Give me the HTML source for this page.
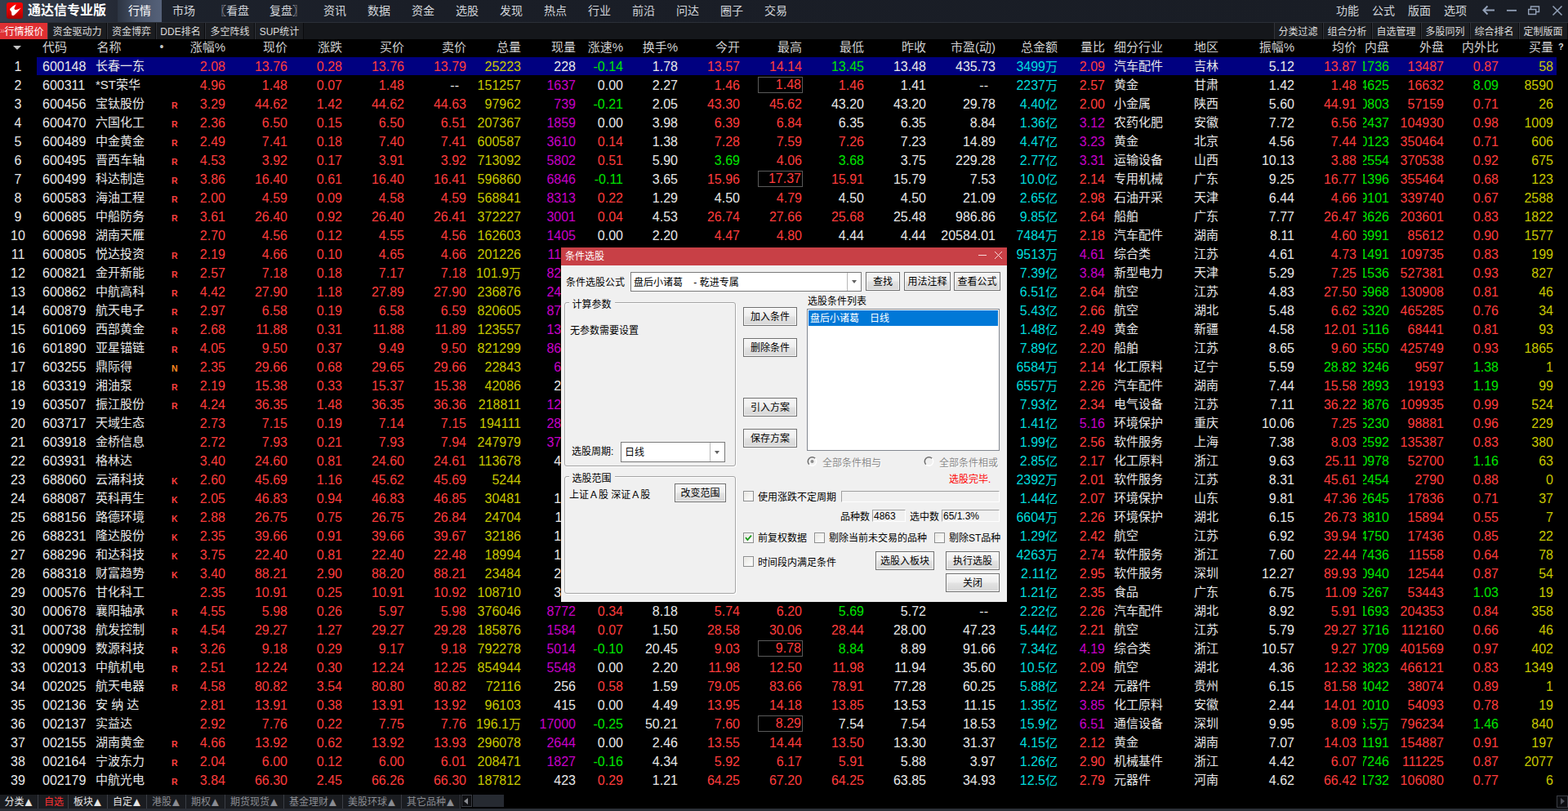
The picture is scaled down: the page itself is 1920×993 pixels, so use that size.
<!DOCTYPE html>
<html lang="zh-CN">
<head>
<meta charset="utf-8">
<title>通达信专业版</title>
<style>
html,body{margin:0;padding:0;background:#000;}
body{width:1920px;height:993px;overflow:hidden;font-family:"Liberation Sans","Noto Sans CJK SC",sans-serif;}
#app{position:relative;width:1920px;height:993px;overflow:hidden;background:#000;}
b,i,s,u{font-weight:normal;font-style:normal;text-decoration:none;}

/* ---------- top bar ---------- */
.topbar{position:absolute;left:0;top:0;width:1920px;height:27px;
  background:linear-gradient(90deg,#373f4d 0px,#2b313e 90px,#1d222c 200px,#1a1e27 500px,#191d25 1920px);
  border-bottom:1px solid #2b2f37;}
.topbar .logo{position:absolute;left:8px;top:3px;width:20px;height:20px;border-radius:3px;
  background:linear-gradient(180deg,#ff0000 0%,#e00000 50%,#aa0000 100%);}
.topbar .logo svg{position:absolute;left:0;top:0;}
.topbar .title{position:absolute;left:34px;top:0;height:26px;line-height:25px;font-size:16px;font-weight:bold;color:#fff;
  letter-spacing:0px;white-space:nowrap;}
.topbar .act{position:absolute;left:144px;top:0;width:54px;height:27px;
  background:linear-gradient(90deg,#2c3442 0%,#465166 45%,#56627a 100%);}
.topbar .mi{position:absolute;top:0;height:27px;line-height:27px;font-size:14px;color:#d2d5da;white-space:nowrap;}
.topbar .mi.on{color:#fff;}
.topbar svg.ic{position:absolute;top:0;}

/* ---------- sub tab bar ---------- */
.subbar{position:absolute;left:0;top:28px;width:1920px;height:20px;background:#15171b;}
.subbar .st{position:absolute;top:0;height:20px;line-height:22px;font-size:12px;color:#dcdcdc;text-align:center;
  box-sizing:border-box;border-right:1px solid #0a0b0d;border-left:1px solid #31343a;background:#1b1d21;white-space:nowrap;}
.subbar .st.on{background:#df3033;color:#fff;border-right:none;border-left:none;}
.subbar .st.rt{padding-right:1px;}
.subbar .chev{position:absolute;left:0;top:0;font-size:11px;color:#f0a0a0;line-height:19px;}

/* ---------- header row ---------- */
.hdr{position:absolute;left:0;top:48px;width:1920px;height:22px;}
.hdr b{position:absolute;top:-2px;font-size:15px;line-height:23px;color:#cfcfcf;white-space:nowrap;}
.hdr .tri{position:absolute;left:15.5px;top:7.5px;width:0;height:0;border-left:5px solid transparent;border-right:5px solid transparent;border-top:5.5px solid #c4c4c4;}
.hdr .dot{position:absolute;left:195.5px;top:0;font-size:14px;line-height:19px;color:#c4c4c4;}
.hdr .q{position:absolute;left:1908px;top:0;font-size:11px;font-weight:bold;line-height:19px;color:#d8d8d8;}

/* ---------- grid ---------- */
.grid{position:absolute;left:0;top:0;width:1920px;height:970px;}
.row{position:absolute;left:0;width:1920px;height:23px;}
.row.sel::before{content:"";position:absolute;left:45px;top:0;width:1861px;height:22px;background:#000080;}
.row b{position:absolute;top:0;font-size:16px;line-height:23px;white-space:nowrap;}
.row b i{font-size:15px;}
.row b.k{font-size:15px;top:-1px;}
.row b.idx{left:0;width:44px;text-align:center;}
.row b.mk{left:210px;top:2px;font-size:10.5px;font-weight:bold;color:#ff4040;}
.row b.mk.n{color:#ff8a20;}
.row s.clip{position:absolute;left:1669px;top:0;width:32px;height:23px;overflow:hidden;}
.row u.bx{position:absolute;left:928px;top:1px;width:53px;height:18px;border:1px solid #5a5a5a;}
.r{color:#ff3c3c;} .g{color:#00e600;} .w{color:#e8e8e8;} .y{color:#c8c800;} .m{color:#c800c8;} .c{color:#00dcdc;}

/* ---------- bottom bar ---------- */
.bbar{position:absolute;left:0;top:970px;width:1920px;height:23px;background:#000;}
.bbar .edge{position:absolute;left:0;top:20px;width:1920px;height:3px;background:#2b2f37;}
.bbar .bt{position:absolute;top:3px;height:17px;line-height:18px;font-size:12px;color:#e4e4e4;text-align:center;
  box-sizing:border-box;border-right:1px solid #3a3d44;background:#1a1c20;white-space:nowrap;padding-left:2px;}
.bbar .bt.dim{color:#8a8c92;}
.bbar .bt.red{color:#ff3030;}
.bbar .bt em{font-style:normal;font-size:15px;line-height:1px;position:relative;top:1px;margin-left:-2px;}
.bbar .sl{position:absolute;left:565px;top:3px;width:13px;height:15px;border:1px solid #3a3d44;box-sizing:border-box;background:#101114;}
.bbar .sl::after{content:"";position:absolute;left:2px;top:3px;border-top:4px solid transparent;border-bottom:4px solid transparent;border-right:5px solid #8a8c92;}
.bbar .thumb{position:absolute;left:579px;top:3px;width:38px;height:15px;background:#262a31;}
.bbar .sr{position:absolute;left:1906px;top:4px;width:14px;height:15px;border:1px solid #3a3d44;box-sizing:border-box;background:#0c0d10;}
.bbar .sr::after{content:"";position:absolute;left:4px;top:2px;border-top:4.5px solid transparent;border-bottom:4.5px solid transparent;border-left:5px solid #50535b;}

/* ---------- dialog ---------- */
.dlg{position:absolute;left:687px;top:303px;width:546px;height:434px;background:#f0f0f0;font-family:"Liberation Sans","Noto Sans CJK SC",sans-serif;font-size:12px;color:#000;}
.dlg .tb{position:absolute;left:0;top:0;width:546px;height:22px;background:#c84046;}
.dlg .tb span{position:absolute;left:5px;top:0;line-height:23px;color:#fff;font-size:12px;}
.dlg .tb svg{position:absolute;left:0;top:0;}
.dlg .t{position:absolute;white-space:nowrap;line-height:14px;font-size:12px;}
.dlg .btn{position:absolute;box-sizing:border-box;border:1px solid #707070;
  background:linear-gradient(180deg,#f6f6f6 0%,#efefef 45%,#e2e2e2 55%,#d6d6d6 100%);
  box-shadow:inset 0 0 0 1px rgba(255,255,255,.75);
  text-align:center;font-size:12px;white-space:nowrap;line-height:22px !important;}
.dlg .btn.def{outline:1px solid #000;}
.dlg .gb{position:absolute;box-sizing:border-box;border:1px solid #a4a4a4;border-radius:3px;box-shadow:1px 1px 0 #fff, inset 1px 1px 0 #fff;}
.dlg .gb .lg{position:absolute;left:4.5px;top:-5px;background:#f0f0f0;padding:0 4px;line-height:14px;}
.dlg .inp{position:absolute;box-sizing:border-box;background:#fff;border:1px solid #7a7a7a;}
.dlg .sunk{position:absolute;box-sizing:border-box;background:#f0f0f0;border:1px solid;border-color:#a0a0a0 #fff #fff #a0a0a0;}
.dlg .cb{position:absolute;width:13px;height:13px;box-sizing:border-box;background:linear-gradient(135deg,#e6e4de 0%,#f4f4f2 55%,#fdfdfd 100%);border:1px solid #8e8f8f;box-shadow:inset 0 0 0 1px #f4f4f4;}
.dlg .dis{color:#8a8a8a;text-shadow:1px 1px 0 #fff;}
.row b.dd{padding-right:9px;}
.row b.bxt{margin-right:1px;top:-1px;}

</style>
</head>
<body>
<div id="app">
<div class="topbar">
  <span class="logo"><svg width="20" height="20" viewBox="0 0 20 20"><path d="M11.7 2.2 C9 3.5 5.5 6 4.2 7.8 C3.8 8.6 4.4 9.6 5.2 10.4 L6 11.5 C6.1 12.5 6.1 13.5 6.3 14.4 C6.4 15.4 6.8 16.1 7.4 16.1 C8.2 16.1 8.9 15.8 9.5 15.4 C12.4 12.6 15.4 9.6 17.9 6.4 C16.8 7.2 15.6 7.8 14.4 8.2 C13.2 8.7 12 9 11 8.9 C10 8.8 9.4 8.3 9.5 7.6 C9.8 6.5 10.2 5.6 10.5 5 C10.9 4 11.3 3.1 11.7 2.2 Z" fill="#fff"/></svg></span>
  <span class="title">通达信专业版</span>
  <span class="act"></span>
  <span class="mi on" style="left:157px">行情</span>
  <span class="mi" style="left:211px">市场</span>
  <span class="mi" style="left:263px">〖看盘</span>
  <span class="mi" style="left:330px">复盘〗</span>
  <span class="mi" style="left:396px">资讯</span>
  <span class="mi" style="left:450px">数据</span>
  <span class="mi" style="left:504px">资金</span>
  <span class="mi" style="left:558px">选股</span>
  <span class="mi" style="left:612px">发现</span>
  <span class="mi" style="left:666px">热点</span>
  <span class="mi" style="left:720px">行业</span>
  <span class="mi" style="left:774px">前沿</span>
  <span class="mi" style="left:828px">问达</span>
  <span class="mi" style="left:882px">圈子</span>
  <span class="mi" style="left:936px">交易</span>
  <span class="mi" style="left:1636px">功能</span>
  <span class="mi" style="left:1680px">公式</span>
  <span class="mi" style="left:1724px">版面</span>
  <span class="mi" style="left:1768px">选项</span>
  <svg class="ic" style="left:1810px" width="110" height="27" viewBox="0 0 110 27" fill="none" stroke="#93a1b8" stroke-width="1.6">
    <path d="M20 12.5 H7 M11.5 7.5 L6.5 12.5 L11.5 17.5" stroke-width="2"/>
    <path d="M35 12.8 H47" stroke-width="1.8"/>
    <path d="M61.7 11.5 h9 v6 h-9 z M64.5 11.2 v-3.2 h10 v6.5 h-3.5" stroke-width="1.4"/>
    <path d="M91.5 7.5 L102.5 18.5 M102.5 7.5 L91.5 18.5" stroke-width="1.5"/>
  </svg>
</div>
<div class="subbar">
  <span class="st on" style="left:0;width:58px;padding-left:1px"><span class="chev">»</span>行情报价</span>
  <span class="st" style="left:58px;width:73px">资金驱动力</span>
  <span class="st" style="left:131px;width:60px">资金博弈</span>
  <span class="st" style="left:191px;width:60px">DDE排名</span>
  <span class="st" style="left:251px;width:61px">多空阵线</span>
  <span class="st" style="left:312px;width:60px">SUP统计</span>
  <span class="st rt" style="left:1560px;width:60px">分类过滤</span>
  <span class="st rt" style="left:1620px;width:60px">组合分析</span>
  <span class="st rt" style="left:1680px;width:60px">自选管理</span>
  <span class="st rt" style="left:1740px;width:60px">多股同列</span>
  <span class="st rt" style="left:1800px;width:60px">综合排名</span>
  <span class="st rt" style="left:1860px;width:60px">定制版面</span>
</div>

<div class="hdr"><span class="tri"></span><span class="dot">•</span><b style="left:52px">代码</b><b style="left:118.5px">名称</b><b style="right:1644px">涨幅%</b><b style="right:1568px">现价</b><b style="right:1501px">涨跌</b><b style="right:1425px">买价</b><b style="right:1349px">卖价</b><b style="right:1282px">总量</b><b style="right:1215px">现量</b><b style="right:1157px">涨速%</b><b style="right:1090px">换手%</b><b style="right:1014px">今开</b><b style="right:938px">最高</b><b style="right:862px">最低</b><b style="right:786px">昨收</b><b style="right:701px">市盈(动)</b><b style="right:625px">总金额</b><b style="right:567px">量比</b><b style="right:335px">振幅%</b><b style="right:259px">均价</b><b style="right:219px">内盘</b><b style="right:152px">外盘</b><b style="right:85px">内外比</b><b style="right:18px">买量</b><b style="left:1364px">细分行业</b><b style="left:1462px">地区</b><span class="q">?</span></div>
<div class="grid">
<div class="row sel" style="top:70px"><b class="w idx">1</b><b class="w " style="left:52px">600148</b><b class="w k" style="left:117px">长春一东</b><b class="r" style="right:1644px">2.08</b><b class="r" style="right:1568px">13.76</b><b class="r" style="right:1501px">0.28</b><b class="r" style="right:1425px">13.76</b><b class="r" style="right:1349px">13.79</b><b class="y" style="right:1282px">25223</b><b class="w" style="right:1215px">228</b><b class="g" style="right:1157px">-0.14</b><b class="w" style="right:1090px">1.78</b><b class="r" style="right:1014px">13.57</b><b class="r" style="right:938px">14.14</b><b class="g" style="right:862px">13.45</b><b class="w" style="right:786px">13.48</b><b class="w" style="right:701px">435.73</b><b class="c" style="right:625px">3499<i>万</i></b><b class="r" style="right:567px">2.09</b><b class="w k" style="left:1364px">汽车配件</b><b class="w k" style="left:1462px">吉林</b><b class="w" style="right:335px">5.12</b><b class="r" style="right:259px">13.87</b><s class="clip"><b class="g" style="right:0">11736</b></s><b class="r" style="right:152px">13487</b><b class="r" style="right:85px">0.87</b><b class="y" style="right:18px">58</b></div>
<div class="row" style="top:93px"><b class="w idx">2</b><b class="w " style="left:52px">600311</b><b class="w k" style="left:117px">*ST荣华</b><b class="r" style="right:1644px">4.96</b><b class="r" style="right:1568px">1.48</b><b class="r" style="right:1501px">0.07</b><b class="r" style="right:1425px">1.48</b><b class="w dd" style="right:1349px">--</b><b class="y" style="right:1282px">151257</b><b class="m" style="right:1215px">1637</b><b class="w" style="right:1157px">0.00</b><b class="w" style="right:1090px">2.27</b><b class="r" style="right:1014px">1.46</b><u class="bx"></u><b class="r bxt" style="right:938px">1.48</b><b class="r" style="right:862px">1.46</b><b class="w" style="right:786px">1.41</b><b class="w dd" style="right:701px">--</b><b class="c" style="right:625px">2237<i>万</i></b><b class="r" style="right:567px">2.57</b><b class="w k" style="left:1364px">黄金</b><b class="w k" style="left:1462px">甘肃</b><b class="w" style="right:335px">1.42</b><b class="r" style="right:259px">1.48</b><s class="clip"><b class="g" style="right:0">134625</b></s><b class="r" style="right:152px">16632</b><b class="g" style="right:85px">8.09</b><b class="y" style="right:18px">8590</b></div>
<div class="row" style="top:116px"><b class="w idx">3</b><b class="w " style="left:52px">600456</b><b class="w k" style="left:117px">宝钛股份</b><b class="mk ">R</b><b class="r" style="right:1644px">3.29</b><b class="r" style="right:1568px">44.62</b><b class="r" style="right:1501px">1.42</b><b class="r" style="right:1425px">44.62</b><b class="r" style="right:1349px">44.63</b><b class="y" style="right:1282px">97962</b><b class="m" style="right:1215px">739</b><b class="g" style="right:1157px">-0.21</b><b class="w" style="right:1090px">2.05</b><b class="r" style="right:1014px">43.30</b><b class="r" style="right:938px">45.62</b><b class="w" style="right:862px">43.20</b><b class="w" style="right:786px">43.20</b><b class="w" style="right:701px">29.78</b><b class="c" style="right:625px">4.40<i>亿</i></b><b class="r" style="right:567px">2.00</b><b class="w k" style="left:1364px">小金属</b><b class="w k" style="left:1462px">陕西</b><b class="w" style="right:335px">5.60</b><b class="r" style="right:259px">44.91</b><s class="clip"><b class="g" style="right:0">40803</b></s><b class="r" style="right:152px">57159</b><b class="r" style="right:85px">0.71</b><b class="y" style="right:18px">26</b></div>
<div class="row" style="top:139px"><b class="w idx">4</b><b class="w " style="left:52px">600470</b><b class="w k" style="left:117px">六国化工</b><b class="mk ">R</b><b class="r" style="right:1644px">2.36</b><b class="r" style="right:1568px">6.50</b><b class="r" style="right:1501px">0.15</b><b class="r" style="right:1425px">6.50</b><b class="r" style="right:1349px">6.51</b><b class="y" style="right:1282px">207367</b><b class="m" style="right:1215px">1859</b><b class="w" style="right:1157px">0.00</b><b class="w" style="right:1090px">3.98</b><b class="r" style="right:1014px">6.39</b><b class="r" style="right:938px">6.84</b><b class="w" style="right:862px">6.35</b><b class="w" style="right:786px">6.35</b><b class="w" style="right:701px">8.84</b><b class="c" style="right:625px">1.36<i>亿</i></b><b class="m" style="right:567px">3.12</b><b class="w k" style="left:1364px">农药化肥</b><b class="w k" style="left:1462px">安徽</b><b class="w" style="right:335px">7.72</b><b class="r" style="right:259px">6.56</b><s class="clip"><b class="g" style="right:0">102437</b></s><b class="r" style="right:152px">104930</b><b class="r" style="right:85px">0.98</b><b class="y" style="right:18px">1009</b></div>
<div class="row" style="top:162px"><b class="w idx">5</b><b class="w " style="left:52px">600489</b><b class="w k" style="left:117px">中金黄金</b><b class="mk ">R</b><b class="r" style="right:1644px">2.49</b><b class="r" style="right:1568px">7.41</b><b class="r" style="right:1501px">0.18</b><b class="r" style="right:1425px">7.40</b><b class="r" style="right:1349px">7.41</b><b class="y" style="right:1282px">600587</b><b class="m" style="right:1215px">3610</b><b class="r" style="right:1157px">0.14</b><b class="w" style="right:1090px">1.38</b><b class="r" style="right:1014px">7.28</b><b class="r" style="right:938px">7.59</b><b class="r" style="right:862px">7.26</b><b class="w" style="right:786px">7.23</b><b class="w" style="right:701px">14.89</b><b class="c" style="right:625px">4.47<i>亿</i></b><b class="m" style="right:567px">3.23</b><b class="w k" style="left:1364px">黄金</b><b class="w k" style="left:1462px">北京</b><b class="w" style="right:335px">4.56</b><b class="r" style="right:259px">7.44</b><s class="clip"><b class="g" style="right:0">250123</b></s><b class="r" style="right:152px">350464</b><b class="r" style="right:85px">0.71</b><b class="y" style="right:18px">606</b></div>
<div class="row" style="top:185px"><b class="w idx">6</b><b class="w " style="left:52px">600495</b><b class="w k" style="left:117px">晋西车轴</b><b class="mk ">R</b><b class="r" style="right:1644px">4.53</b><b class="r" style="right:1568px">3.92</b><b class="r" style="right:1501px">0.17</b><b class="r" style="right:1425px">3.91</b><b class="r" style="right:1349px">3.92</b><b class="y" style="right:1282px">713092</b><b class="m" style="right:1215px">5802</b><b class="r" style="right:1157px">0.51</b><b class="w" style="right:1090px">5.90</b><b class="g" style="right:1014px">3.69</b><b class="r" style="right:938px">4.06</b><b class="g" style="right:862px">3.68</b><b class="w" style="right:786px">3.75</b><b class="w" style="right:701px">229.28</b><b class="c" style="right:625px">2.77<i>亿</i></b><b class="m" style="right:567px">3.31</b><b class="w k" style="left:1364px">运输设备</b><b class="w k" style="left:1462px">山西</b><b class="w" style="right:335px">10.13</b><b class="r" style="right:259px">3.88</b><s class="clip"><b class="g" style="right:0">342554</b></s><b class="r" style="right:152px">370538</b><b class="r" style="right:85px">0.92</b><b class="y" style="right:18px">675</b></div>
<div class="row" style="top:208px"><b class="w idx">7</b><b class="w " style="left:52px">600499</b><b class="w k" style="left:117px">科达制造</b><b class="mk ">R</b><b class="r" style="right:1644px">3.86</b><b class="r" style="right:1568px">16.40</b><b class="r" style="right:1501px">0.61</b><b class="r" style="right:1425px">16.40</b><b class="r" style="right:1349px">16.41</b><b class="y" style="right:1282px">596860</b><b class="m" style="right:1215px">6846</b><b class="g" style="right:1157px">-0.11</b><b class="w" style="right:1090px">3.65</b><b class="r" style="right:1014px">15.96</b><u class="bx"></u><b class="r bxt" style="right:938px">17.37</b><b class="r" style="right:862px">15.91</b><b class="w" style="right:786px">15.79</b><b class="w" style="right:701px">7.53</b><b class="c" style="right:625px">10.0<i>亿</i></b><b class="r" style="right:567px">2.14</b><b class="w k" style="left:1364px">专用机械</b><b class="w k" style="left:1462px">广东</b><b class="w" style="right:335px">9.25</b><b class="r" style="right:259px">16.77</b><s class="clip"><b class="g" style="right:0">241396</b></s><b class="r" style="right:152px">355464</b><b class="r" style="right:85px">0.68</b><b class="y" style="right:18px">123</b></div>
<div class="row" style="top:231px"><b class="w idx">8</b><b class="w " style="left:52px">600583</b><b class="w k" style="left:117px">海油工程</b><b class="mk ">R</b><b class="r" style="right:1644px">2.00</b><b class="r" style="right:1568px">4.59</b><b class="r" style="right:1501px">0.09</b><b class="r" style="right:1425px">4.58</b><b class="r" style="right:1349px">4.59</b><b class="y" style="right:1282px">568841</b><b class="m" style="right:1215px">8313</b><b class="r" style="right:1157px">0.22</b><b class="w" style="right:1090px">1.29</b><b class="w" style="right:1014px">4.50</b><b class="r" style="right:938px">4.79</b><b class="w" style="right:862px">4.50</b><b class="w" style="right:786px">4.50</b><b class="w" style="right:701px">21.09</b><b class="c" style="right:625px">2.65<i>亿</i></b><b class="r" style="right:567px">2.98</b><b class="w k" style="left:1364px">石油开采</b><b class="w k" style="left:1462px">天津</b><b class="w" style="right:335px">6.44</b><b class="r" style="right:259px">4.66</b><s class="clip"><b class="g" style="right:0">229101</b></s><b class="r" style="right:152px">339740</b><b class="r" style="right:85px">0.67</b><b class="y" style="right:18px">2588</b></div>
<div class="row" style="top:254px"><b class="w idx">9</b><b class="w " style="left:52px">600685</b><b class="w k" style="left:117px">中船防务</b><b class="mk ">R</b><b class="r" style="right:1644px">3.61</b><b class="r" style="right:1568px">26.40</b><b class="r" style="right:1501px">0.92</b><b class="r" style="right:1425px">26.40</b><b class="r" style="right:1349px">26.41</b><b class="y" style="right:1282px">372227</b><b class="m" style="right:1215px">3001</b><b class="r" style="right:1157px">0.04</b><b class="w" style="right:1090px">4.53</b><b class="r" style="right:1014px">26.74</b><b class="r" style="right:938px">27.66</b><b class="r" style="right:862px">25.68</b><b class="w" style="right:786px">25.48</b><b class="w" style="right:701px">986.86</b><b class="c" style="right:625px">9.85<i>亿</i></b><b class="r" style="right:567px">2.64</b><b class="w k" style="left:1364px">船舶</b><b class="w k" style="left:1462px">广东</b><b class="w" style="right:335px">7.77</b><b class="r" style="right:259px">26.47</b><s class="clip"><b class="g" style="right:0">168626</b></s><b class="r" style="right:152px">203601</b><b class="r" style="right:85px">0.83</b><b class="y" style="right:18px">1822</b></div>
<div class="row" style="top:277px"><b class="w idx">10</b><b class="w " style="left:52px">600698</b><b class="w k" style="left:117px">湖南天雁</b><b class="r" style="right:1644px">2.70</b><b class="r" style="right:1568px">4.56</b><b class="r" style="right:1501px">0.12</b><b class="r" style="right:1425px">4.55</b><b class="r" style="right:1349px">4.56</b><b class="y" style="right:1282px">162603</b><b class="m" style="right:1215px">1405</b><b class="w" style="right:1157px">0.00</b><b class="w" style="right:1090px">2.20</b><b class="r" style="right:1014px">4.47</b><b class="r" style="right:938px">4.80</b><b class="w" style="right:862px">4.44</b><b class="w" style="right:786px">4.44</b><b class="w" style="right:701px">20584.01</b><b class="c" style="right:625px">7484<i>万</i></b><b class="r" style="right:567px">2.18</b><b class="w k" style="left:1364px">汽车配件</b><b class="w k" style="left:1462px">湖南</b><b class="w" style="right:335px">8.11</b><b class="r" style="right:259px">4.60</b><s class="clip"><b class="g" style="right:0">76991</b></s><b class="r" style="right:152px">85612</b><b class="r" style="right:85px">0.90</b><b class="y" style="right:18px">1577</b></div>
<div class="row" style="top:300px"><b class="w idx">11</b><b class="w " style="left:52px">600805</b><b class="w k" style="left:117px">悦达投资</b><b class="mk ">R</b><b class="r" style="right:1644px">2.19</b><b class="r" style="right:1568px">4.66</b><b class="r" style="right:1501px">0.10</b><b class="r" style="right:1425px">4.65</b><b class="r" style="right:1349px">4.66</b><b class="y" style="right:1282px">201226</b><b class="m" style="right:1215px">1125</b><b class="w" style="right:1157px">0.00</b><b class="w" style="right:1090px">2.36</b><b class="r" style="right:1014px">4.58</b><b class="r" style="right:938px">4.77</b><b class="w" style="right:862px">4.56</b><b class="w" style="right:786px">4.56</b><b class="w dd" style="right:701px">--</b><b class="c" style="right:625px">9513<i>万</i></b><b class="m" style="right:567px">4.61</b><b class="w k" style="left:1364px">综合类</b><b class="w k" style="left:1462px">江苏</b><b class="w" style="right:335px">4.61</b><b class="r" style="right:259px">4.73</b><s class="clip"><b class="g" style="right:0">91491</b></s><b class="r" style="right:152px">109735</b><b class="r" style="right:85px">0.83</b><b class="y" style="right:18px">199</b></div>
<div class="row" style="top:323px"><b class="w idx">12</b><b class="w " style="left:52px">600821</b><b class="w k" style="left:117px">金开新能</b><b class="mk ">R</b><b class="r" style="right:1644px">2.57</b><b class="r" style="right:1568px">7.18</b><b class="r" style="right:1501px">0.18</b><b class="r" style="right:1425px">7.17</b><b class="r" style="right:1349px">7.18</b><b class="y" style="right:1282px">101.9<i>万</i></b><b class="m" style="right:1215px">8236</b><b class="r" style="right:1157px">0.14</b><b class="w" style="right:1090px">5.12</b><b class="r" style="right:1014px">7.02</b><b class="r" style="right:938px">7.37</b><b class="w" style="right:862px">7.00</b><b class="w" style="right:786px">7.00</b><b class="w" style="right:701px">21.35</b><b class="c" style="right:625px">7.39<i>亿</i></b><b class="m" style="right:567px">3.84</b><b class="w k" style="left:1364px">新型电力</b><b class="w k" style="left:1462px">天津</b><b class="w" style="right:335px">5.29</b><b class="r" style="right:259px">7.25</b><s class="clip"><b class="g" style="right:0">491536</b></s><b class="r" style="right:152px">527381</b><b class="r" style="right:85px">0.93</b><b class="y" style="right:18px">827</b></div>
<div class="row" style="top:346px"><b class="w idx">13</b><b class="w " style="left:52px">600862</b><b class="w k" style="left:117px">中航高科</b><b class="mk ">R</b><b class="r" style="right:1644px">4.42</b><b class="r" style="right:1568px">27.90</b><b class="r" style="right:1501px">1.18</b><b class="r" style="right:1425px">27.89</b><b class="r" style="right:1349px">27.90</b><b class="y" style="right:1282px">236876</b><b class="m" style="right:1215px">2417</b><b class="r" style="right:1157px">0.11</b><b class="w" style="right:1090px">1.70</b><b class="r" style="right:1014px">26.80</b><b class="r" style="right:938px">28.01</b><b class="w" style="right:862px">26.72</b><b class="w" style="right:786px">26.72</b><b class="w" style="right:701px">58.41</b><b class="c" style="right:625px">6.51<i>亿</i></b><b class="r" style="right:567px">2.64</b><b class="w k" style="left:1364px">航空</b><b class="w k" style="left:1462px">江苏</b><b class="w" style="right:335px">4.83</b><b class="r" style="right:259px">27.50</b><s class="clip"><b class="g" style="right:0">105968</b></s><b class="r" style="right:152px">130908</b><b class="r" style="right:85px">0.81</b><b class="y" style="right:18px">46</b></div>
<div class="row" style="top:369px"><b class="w idx">14</b><b class="w " style="left:52px">600879</b><b class="w k" style="left:117px">航天电子</b><b class="mk ">R</b><b class="r" style="right:1644px">2.97</b><b class="r" style="right:1568px">6.58</b><b class="r" style="right:1501px">0.19</b><b class="r" style="right:1425px">6.58</b><b class="r" style="right:1349px">6.59</b><b class="y" style="right:1282px">820605</b><b class="m" style="right:1215px">8712</b><b class="w" style="right:1157px">0.00</b><b class="w" style="right:1090px">3.02</b><b class="r" style="right:1014px">6.41</b><b class="r" style="right:938px">6.74</b><b class="w" style="right:862px">6.39</b><b class="w" style="right:786px">6.39</b><b class="w" style="right:701px">30.15</b><b class="c" style="right:625px">5.43<i>亿</i></b><b class="r" style="right:567px">2.66</b><b class="w k" style="left:1364px">航空</b><b class="w k" style="left:1462px">湖北</b><b class="w" style="right:335px">5.48</b><b class="r" style="right:259px">6.62</b><s class="clip"><b class="g" style="right:0">355320</b></s><b class="r" style="right:152px">465285</b><b class="r" style="right:85px">0.76</b><b class="y" style="right:18px">34</b></div>
<div class="row" style="top:392px"><b class="w idx">15</b><b class="w " style="left:52px">601069</b><b class="w k" style="left:117px">西部黄金</b><b class="mk ">R</b><b class="r" style="right:1644px">2.68</b><b class="r" style="right:1568px">11.88</b><b class="r" style="right:1501px">0.31</b><b class="r" style="right:1425px">11.88</b><b class="r" style="right:1349px">11.89</b><b class="y" style="right:1282px">123557</b><b class="m" style="right:1215px">1346</b><b class="r" style="right:1157px">0.08</b><b class="w" style="right:1090px">1.39</b><b class="r" style="right:1014px">11.62</b><b class="r" style="right:938px">12.15</b><b class="r" style="right:862px">11.62</b><b class="w" style="right:786px">11.57</b><b class="w" style="right:701px">72.18</b><b class="c" style="right:625px">1.48<i>亿</i></b><b class="r" style="right:567px">2.49</b><b class="w k" style="left:1364px">黄金</b><b class="w k" style="left:1462px">新疆</b><b class="w" style="right:335px">4.58</b><b class="r" style="right:259px">12.01</b><s class="clip"><b class="g" style="right:0">55116</b></s><b class="r" style="right:152px">68441</b><b class="r" style="right:85px">0.81</b><b class="y" style="right:18px">93</b></div>
<div class="row" style="top:415px"><b class="w idx">16</b><b class="w " style="left:52px">601890</b><b class="w k" style="left:117px">亚星锚链</b><b class="mk ">R</b><b class="r" style="right:1644px">4.05</b><b class="r" style="right:1568px">9.50</b><b class="r" style="right:1501px">0.37</b><b class="r" style="right:1425px">9.49</b><b class="r" style="right:1349px">9.50</b><b class="y" style="right:1282px">821299</b><b class="m" style="right:1215px">8641</b><b class="g" style="right:1157px">-0.10</b><b class="w" style="right:1090px">8.56</b><b class="r" style="right:1014px">9.15</b><b class="r" style="right:938px">9.92</b><b class="w" style="right:862px">9.13</b><b class="w" style="right:786px">9.13</b><b class="w" style="right:701px">61.27</b><b class="c" style="right:625px">7.89<i>亿</i></b><b class="r" style="right:567px">2.20</b><b class="w k" style="left:1364px">船舶</b><b class="w k" style="left:1462px">江苏</b><b class="w" style="right:335px">8.65</b><b class="r" style="right:259px">9.60</b><s class="clip"><b class="g" style="right:0">395550</b></s><b class="r" style="right:152px">425749</b><b class="r" style="right:85px">0.93</b><b class="y" style="right:18px">1865</b></div>
<div class="row" style="top:438px"><b class="w idx">17</b><b class="w " style="left:52px">603255</b><b class="w k" style="left:117px">鼎际得</b><b class="mk n">N</b><b class="r" style="right:1644px">2.35</b><b class="r" style="right:1568px">29.66</b><b class="r" style="right:1501px">0.68</b><b class="r" style="right:1425px">29.65</b><b class="r" style="right:1349px">29.66</b><b class="y" style="right:1282px">22843</b><b class="m" style="right:1215px">612</b><b class="r" style="right:1157px">0.03</b><b class="w" style="right:1090px">6.85</b><b class="g" style="right:1014px">28.60</b><b class="r" style="right:938px">29.98</b><b class="g" style="right:862px">28.36</b><b class="w" style="right:786px">28.98</b><b class="w dd" style="right:701px">--</b><b class="c" style="right:625px">6584<i>万</i></b><b class="r" style="right:567px">2.14</b><b class="w k" style="left:1364px">化工原料</b><b class="w k" style="left:1462px">辽宁</b><b class="w" style="right:335px">5.59</b><b class="g" style="right:259px">28.82</b><s class="clip"><b class="g" style="right:0">13246</b></s><b class="r" style="right:152px">9597</b><b class="g" style="right:85px">1.38</b><b class="y" style="right:18px">1</b></div>
<div class="row" style="top:461px"><b class="w idx">18</b><b class="w " style="left:52px">603319</b><b class="w k" style="left:117px">湘油泵</b><b class="mk ">R</b><b class="r" style="right:1644px">2.19</b><b class="r" style="right:1568px">15.38</b><b class="r" style="right:1501px">0.33</b><b class="r" style="right:1425px">15.37</b><b class="r" style="right:1349px">15.38</b><b class="y" style="right:1282px">42086</b><b class="w" style="right:1215px">215</b><b class="r" style="right:1157px">0.06</b><b class="w" style="right:1090px">2.02</b><b class="w" style="right:1014px">15.05</b><b class="r" style="right:938px">15.93</b><b class="g" style="right:862px">14.81</b><b class="w" style="right:786px">15.05</b><b class="w" style="right:701px">24.57</b><b class="c" style="right:625px">6557<i>万</i></b><b class="r" style="right:567px">2.26</b><b class="w k" style="left:1364px">汽车配件</b><b class="w k" style="left:1462px">湖南</b><b class="w" style="right:335px">7.44</b><b class="r" style="right:259px">15.58</b><s class="clip"><b class="g" style="right:0">22893</b></s><b class="r" style="right:152px">19193</b><b class="g" style="right:85px">1.19</b><b class="y" style="right:18px">99</b></div>
<div class="row" style="top:484px"><b class="w idx">19</b><b class="w " style="left:52px">603507</b><b class="w k" style="left:117px">振江股份</b><b class="mk ">R</b><b class="r" style="right:1644px">4.24</b><b class="r" style="right:1568px">36.35</b><b class="r" style="right:1501px">1.48</b><b class="r" style="right:1425px">36.35</b><b class="r" style="right:1349px">36.36</b><b class="y" style="right:1282px">218811</b><b class="m" style="right:1215px">1273</b><b class="r" style="right:1157px">0.05</b><b class="w" style="right:1090px">15.34</b><b class="r" style="right:1014px">34.90</b><b class="r" style="right:938px">37.05</b><b class="g" style="right:862px">34.57</b><b class="w" style="right:786px">34.87</b><b class="w" style="right:701px">38.26</b><b class="c" style="right:625px">7.93<i>亿</i></b><b class="r" style="right:567px">2.34</b><b class="w k" style="left:1364px">电气设备</b><b class="w k" style="left:1462px">江苏</b><b class="w" style="right:335px">7.11</b><b class="r" style="right:259px">36.22</b><s class="clip"><b class="g" style="right:0">108876</b></s><b class="r" style="right:152px">109935</b><b class="r" style="right:85px">0.99</b><b class="y" style="right:18px">524</b></div>
<div class="row" style="top:507px"><b class="w idx">20</b><b class="w " style="left:52px">603717</b><b class="w k" style="left:117px">天域生态</b><b class="r" style="right:1644px">2.73</b><b class="r" style="right:1568px">7.15</b><b class="r" style="right:1501px">0.19</b><b class="r" style="right:1425px">7.14</b><b class="r" style="right:1349px">7.15</b><b class="y" style="right:1282px">194111</b><b class="m" style="right:1215px">2836</b><b class="w" style="right:1157px">0.00</b><b class="w" style="right:1090px">6.69</b><b class="w" style="right:1014px">6.96</b><b class="r" style="right:938px">7.52</b><b class="g" style="right:862px">6.82</b><b class="w" style="right:786px">6.96</b><b class="w dd" style="right:701px">--</b><b class="c" style="right:625px">1.41<i>亿</i></b><b class="m" style="right:567px">5.16</b><b class="w k" style="left:1364px">环境保护</b><b class="w k" style="left:1462px">重庆</b><b class="w" style="right:335px">10.06</b><b class="r" style="right:259px">7.25</b><s class="clip"><b class="g" style="right:0">95230</b></s><b class="r" style="right:152px">98881</b><b class="r" style="right:85px">0.96</b><b class="y" style="right:18px">229</b></div>
<div class="row" style="top:530px"><b class="w idx">21</b><b class="w " style="left:52px">603918</b><b class="w k" style="left:117px">金桥信息</b><b class="r" style="right:1644px">2.72</b><b class="r" style="right:1568px">7.93</b><b class="r" style="right:1501px">0.21</b><b class="r" style="right:1425px">7.93</b><b class="r" style="right:1349px">7.94</b><b class="y" style="right:1282px">247979</b><b class="m" style="right:1215px">3712</b><b class="r" style="right:1157px">0.12</b><b class="w" style="right:1090px">6.75</b><b class="w" style="right:1014px">7.72</b><b class="r" style="right:938px">8.24</b><b class="g" style="right:862px">7.67</b><b class="w" style="right:786px">7.72</b><b class="w" style="right:701px">86.14</b><b class="c" style="right:625px">1.99<i>亿</i></b><b class="r" style="right:567px">2.56</b><b class="w k" style="left:1364px">软件服务</b><b class="w k" style="left:1462px">上海</b><b class="w" style="right:335px">7.38</b><b class="r" style="right:259px">8.03</b><s class="clip"><b class="g" style="right:0">112592</b></s><b class="r" style="right:152px">135387</b><b class="r" style="right:85px">0.83</b><b class="y" style="right:18px">380</b></div>
<div class="row" style="top:553px"><b class="w idx">22</b><b class="w " style="left:52px">603931</b><b class="w k" style="left:117px">格林达</b><b class="r" style="right:1644px">3.40</b><b class="r" style="right:1568px">24.60</b><b class="r" style="right:1501px">0.81</b><b class="r" style="right:1425px">24.60</b><b class="r" style="right:1349px">24.61</b><b class="y" style="right:1282px">113678</b><b class="w" style="right:1215px">426</b><b class="r" style="right:1157px">0.04</b><b class="w" style="right:1090px">5.70</b><b class="w" style="right:1014px">23.79</b><b class="r" style="right:938px">25.80</b><b class="g" style="right:862px">23.51</b><b class="w" style="right:786px">23.79</b><b class="w" style="right:701px">32.66</b><b class="c" style="right:625px">2.85<i>亿</i></b><b class="r" style="right:567px">2.17</b><b class="w k" style="left:1364px">化工原料</b><b class="w k" style="left:1462px">浙江</b><b class="w" style="right:335px">9.63</b><b class="r" style="right:259px">25.11</b><s class="clip"><b class="g" style="right:0">60978</b></s><b class="r" style="right:152px">52700</b><b class="g" style="right:85px">1.16</b><b class="y" style="right:18px">63</b></div>
<div class="row" style="top:576px"><b class="w idx">23</b><b class="w " style="left:52px">688060</b><b class="w k" style="left:117px">云涌科技</b><b class="mk ">K</b><b class="r" style="right:1644px">2.60</b><b class="r" style="right:1568px">45.69</b><b class="r" style="right:1501px">1.16</b><b class="r" style="right:1425px">45.62</b><b class="r" style="right:1349px">45.69</b><b class="y" style="right:1282px">5244</b><b class="w" style="right:1215px">52</b><b class="w" style="right:1157px">0.00</b><b class="w" style="right:1090px">1.51</b><b class="w" style="right:1014px">44.53</b><b class="r" style="right:938px">47.00</b><b class="g" style="right:862px">43.30</b><b class="w" style="right:786px">44.53</b><b class="w dd" style="right:701px">--</b><b class="c" style="right:625px">2392<i>万</i></b><b class="r" style="right:567px">2.01</b><b class="w k" style="left:1364px">软件服务</b><b class="w k" style="left:1462px">江苏</b><b class="w" style="right:335px">8.31</b><b class="r" style="right:259px">45.61</b><s class="clip"><b class="g" style="right:0">2454</b></s><b class="r" style="right:152px">2790</b><b class="r" style="right:85px">0.88</b><b class="y" style="right:18px">0</b></div>
<div class="row" style="top:599px"><b class="w idx">24</b><b class="w " style="left:52px">688087</b><b class="w k" style="left:117px">英科再生</b><b class="mk ">K</b><b class="r" style="right:1644px">2.05</b><b class="r" style="right:1568px">46.83</b><b class="r" style="right:1501px">0.94</b><b class="r" style="right:1425px">46.83</b><b class="r" style="right:1349px">46.85</b><b class="y" style="right:1282px">30481</b><b class="w" style="right:1215px">146</b><b class="r" style="right:1157px">0.02</b><b class="w" style="right:1090px">2.30</b><b class="w" style="right:1014px">45.89</b><b class="r" style="right:938px">49.44</b><b class="g" style="right:862px">44.94</b><b class="w" style="right:786px">45.89</b><b class="w" style="right:701px">27.15</b><b class="c" style="right:625px">1.44<i>亿</i></b><b class="r" style="right:567px">2.07</b><b class="w k" style="left:1364px">环境保护</b><b class="w k" style="left:1462px">山东</b><b class="w" style="right:335px">9.81</b><b class="r" style="right:259px">47.36</b><s class="clip"><b class="g" style="right:0">12645</b></s><b class="r" style="right:152px">17836</b><b class="r" style="right:85px">0.71</b><b class="y" style="right:18px">37</b></div>
<div class="row" style="top:622px"><b class="w idx">25</b><b class="w " style="left:52px">688156</b><b class="w k" style="left:117px">路德环境</b><b class="mk ">K</b><b class="r" style="right:1644px">2.88</b><b class="r" style="right:1568px">26.75</b><b class="r" style="right:1501px">0.75</b><b class="r" style="right:1425px">26.75</b><b class="r" style="right:1349px">26.84</b><b class="y" style="right:1282px">24704</b><b class="w" style="right:1215px">118</b><b class="g" style="right:1157px">-0.07</b><b class="w" style="right:1090px">4.09</b><b class="w" style="right:1014px">26.00</b><b class="r" style="right:938px">27.30</b><b class="g" style="right:862px">25.70</b><b class="w" style="right:786px">26.00</b><b class="w" style="right:701px">71.22</b><b class="c" style="right:625px">6604<i>万</i></b><b class="r" style="right:567px">2.26</b><b class="w k" style="left:1364px">环境保护</b><b class="w k" style="left:1462px">湖北</b><b class="w" style="right:335px">6.15</b><b class="r" style="right:259px">26.73</b><s class="clip"><b class="g" style="right:0">8810</b></s><b class="r" style="right:152px">15894</b><b class="r" style="right:85px">0.55</b><b class="y" style="right:18px">7</b></div>
<div class="row" style="top:645px"><b class="w idx">26</b><b class="w " style="left:52px">688231</b><b class="w k" style="left:117px">隆达股份</b><b class="mk ">K</b><b class="r" style="right:1644px">2.35</b><b class="r" style="right:1568px">39.66</b><b class="r" style="right:1501px">0.91</b><b class="r" style="right:1425px">39.66</b><b class="r" style="right:1349px">39.67</b><b class="y" style="right:1282px">32186</b><b class="w" style="right:1215px">137</b><b class="r" style="right:1157px">0.03</b><b class="w" style="right:1090px">6.34</b><b class="w" style="right:1014px">38.75</b><b class="r" style="right:938px">40.83</b><b class="g" style="right:862px">38.15</b><b class="w" style="right:786px">38.75</b><b class="w" style="right:701px">62.03</b><b class="c" style="right:625px">1.29<i>亿</i></b><b class="r" style="right:567px">2.42</b><b class="w k" style="left:1364px">航空</b><b class="w k" style="left:1462px">江苏</b><b class="w" style="right:335px">6.92</b><b class="r" style="right:259px">39.94</b><s class="clip"><b class="g" style="right:0">14750</b></s><b class="r" style="right:152px">17436</b><b class="r" style="right:85px">0.85</b><b class="y" style="right:18px">22</b></div>
<div class="row" style="top:668px"><b class="w idx">27</b><b class="w " style="left:52px">688296</b><b class="w k" style="left:117px">和达科技</b><b class="mk ">K</b><b class="r" style="right:1644px">3.75</b><b class="r" style="right:1568px">22.40</b><b class="r" style="right:1501px">0.81</b><b class="r" style="right:1425px">22.40</b><b class="r" style="right:1349px">22.48</b><b class="y" style="right:1282px">18994</b><b class="w" style="right:1215px">104</b><b class="w" style="right:1157px">0.00</b><b class="w" style="right:1090px">3.26</b><b class="w" style="right:1014px">21.59</b><b class="r" style="right:938px">22.95</b><b class="g" style="right:862px">21.31</b><b class="w" style="right:786px">21.59</b><b class="w dd" style="right:701px">--</b><b class="c" style="right:625px">4263<i>万</i></b><b class="r" style="right:567px">2.74</b><b class="w k" style="left:1364px">软件服务</b><b class="w k" style="left:1462px">浙江</b><b class="w" style="right:335px">7.60</b><b class="r" style="right:259px">22.44</b><s class="clip"><b class="g" style="right:0">7436</b></s><b class="r" style="right:152px">11558</b><b class="r" style="right:85px">0.64</b><b class="y" style="right:18px">78</b></div>
<div class="row" style="top:691px"><b class="w idx">28</b><b class="w " style="left:52px">688318</b><b class="w k" style="left:117px">财富趋势</b><b class="mk ">K</b><b class="r" style="right:1644px">3.40</b><b class="r" style="right:1568px">88.21</b><b class="r" style="right:1501px">2.90</b><b class="r" style="right:1425px">88.20</b><b class="r" style="right:1349px">88.21</b><b class="y" style="right:1282px">23484</b><b class="w" style="right:1215px">231</b><b class="r" style="right:1157px">0.10</b><b class="w" style="right:1090px">2.58</b><b class="w" style="right:1014px">85.31</b><b class="r" style="right:938px">94.68</b><b class="g" style="right:862px">84.21</b><b class="w" style="right:786px">85.31</b><b class="w" style="right:701px">46.70</b><b class="c" style="right:625px">2.11<i>亿</i></b><b class="r" style="right:567px">2.95</b><b class="w k" style="left:1364px">软件服务</b><b class="w k" style="left:1462px">深圳</b><b class="w" style="right:335px">12.27</b><b class="r" style="right:259px">89.93</b><s class="clip"><b class="g" style="right:0">10940</b></s><b class="r" style="right:152px">12544</b><b class="r" style="right:85px">0.87</b><b class="y" style="right:18px">54</b></div>
<div class="row" style="top:714px"><b class="w idx">29</b><b class="w " style="left:52px">000576</b><b class="w k" style="left:117px">甘化科工</b><b class="r" style="right:1644px">2.35</b><b class="r" style="right:1568px">10.91</b><b class="r" style="right:1501px">0.25</b><b class="r" style="right:1425px">10.91</b><b class="r" style="right:1349px">10.92</b><b class="y" style="right:1282px">108710</b><b class="w" style="right:1215px">357</b><b class="r" style="right:1157px">0.09</b><b class="w" style="right:1090px">2.51</b><b class="w" style="right:1014px">10.66</b><b class="r" style="right:938px">11.30</b><b class="g" style="right:862px">10.58</b><b class="w" style="right:786px">10.66</b><b class="w" style="right:701px">41.18</b><b class="c" style="right:625px">1.21<i>亿</i></b><b class="r" style="right:567px">2.35</b><b class="w k" style="left:1364px">食品</b><b class="w k" style="left:1462px">广东</b><b class="w" style="right:335px">6.75</b><b class="r" style="right:259px">11.09</b><s class="clip"><b class="g" style="right:0">55267</b></s><b class="r" style="right:152px">53443</b><b class="g" style="right:85px">1.03</b><b class="y" style="right:18px">19</b></div>
<div class="row" style="top:737px"><b class="w idx">30</b><b class="w " style="left:52px">000678</b><b class="w k" style="left:117px">襄阳轴承</b><b class="mk ">R</b><b class="r" style="right:1644px">4.55</b><b class="r" style="right:1568px">5.98</b><b class="r" style="right:1501px">0.26</b><b class="r" style="right:1425px">5.97</b><b class="r" style="right:1349px">5.98</b><b class="y" style="right:1282px">376046</b><b class="m" style="right:1215px">8772</b><b class="r" style="right:1157px">0.34</b><b class="w" style="right:1090px">8.18</b><b class="r" style="right:1014px">5.74</b><b class="r" style="right:938px">6.20</b><b class="g" style="right:862px">5.69</b><b class="w" style="right:786px">5.72</b><b class="w dd" style="right:701px">--</b><b class="c" style="right:625px">2.22<i>亿</i></b><b class="r" style="right:567px">2.26</b><b class="w k" style="left:1364px">汽车配件</b><b class="w k" style="left:1462px">湖北</b><b class="w" style="right:335px">8.92</b><b class="r" style="right:259px">5.91</b><s class="clip"><b class="g" style="right:0">171693</b></s><b class="r" style="right:152px">204353</b><b class="r" style="right:85px">0.84</b><b class="y" style="right:18px">358</b></div>
<div class="row" style="top:760px"><b class="w idx">31</b><b class="w " style="left:52px">000738</b><b class="w k" style="left:117px">航发控制</b><b class="mk ">R</b><b class="r" style="right:1644px">4.54</b><b class="r" style="right:1568px">29.27</b><b class="r" style="right:1501px">1.27</b><b class="r" style="right:1425px">29.27</b><b class="r" style="right:1349px">29.28</b><b class="y" style="right:1282px">185876</b><b class="m" style="right:1215px">1584</b><b class="r" style="right:1157px">0.07</b><b class="w" style="right:1090px">1.50</b><b class="r" style="right:1014px">28.58</b><b class="r" style="right:938px">30.06</b><b class="r" style="right:862px">28.44</b><b class="w" style="right:786px">28.00</b><b class="w" style="right:701px">47.23</b><b class="c" style="right:625px">5.44<i>亿</i></b><b class="r" style="right:567px">2.21</b><b class="w k" style="left:1364px">航空</b><b class="w k" style="left:1462px">江苏</b><b class="w" style="right:335px">5.79</b><b class="r" style="right:259px">29.27</b><s class="clip"><b class="g" style="right:0">73716</b></s><b class="r" style="right:152px">112160</b><b class="r" style="right:85px">0.66</b><b class="y" style="right:18px">46</b></div>
<div class="row" style="top:783px"><b class="w idx">32</b><b class="w " style="left:52px">000909</b><b class="w k" style="left:117px">数源科技</b><b class="mk ">R</b><b class="r" style="right:1644px">3.26</b><b class="r" style="right:1568px">9.18</b><b class="r" style="right:1501px">0.29</b><b class="r" style="right:1425px">9.17</b><b class="r" style="right:1349px">9.18</b><b class="y" style="right:1282px">792278</b><b class="m" style="right:1215px">5014</b><b class="g" style="right:1157px">-0.10</b><b class="w" style="right:1090px">20.45</b><b class="r" style="right:1014px">9.03</b><u class="bx"></u><b class="r bxt" style="right:938px">9.78</b><b class="g" style="right:862px">8.84</b><b class="w" style="right:786px">8.89</b><b class="w" style="right:701px">91.66</b><b class="c" style="right:625px">7.34<i>亿</i></b><b class="m" style="right:567px">4.19</b><b class="w k" style="left:1364px">综合类</b><b class="w k" style="left:1462px">浙江</b><b class="w" style="right:335px">10.57</b><b class="r" style="right:259px">9.27</b><s class="clip"><b class="g" style="right:0">390709</b></s><b class="r" style="right:152px">401569</b><b class="r" style="right:85px">0.97</b><b class="y" style="right:18px">402</b></div>
<div class="row" style="top:806px"><b class="w idx">33</b><b class="w " style="left:52px">002013</b><b class="w k" style="left:117px">中航机电</b><b class="mk ">R</b><b class="r" style="right:1644px">2.51</b><b class="r" style="right:1568px">12.24</b><b class="r" style="right:1501px">0.30</b><b class="r" style="right:1425px">12.24</b><b class="r" style="right:1349px">12.25</b><b class="y" style="right:1282px">854944</b><b class="m" style="right:1215px">5548</b><b class="w" style="right:1157px">0.00</b><b class="w" style="right:1090px">2.20</b><b class="r" style="right:1014px">11.98</b><b class="r" style="right:938px">12.50</b><b class="r" style="right:862px">11.98</b><b class="w" style="right:786px">11.94</b><b class="w" style="right:701px">35.60</b><b class="c" style="right:625px">10.5<i>亿</i></b><b class="r" style="right:567px">2.09</b><b class="w k" style="left:1364px">航空</b><b class="w k" style="left:1462px">湖北</b><b class="w" style="right:335px">4.36</b><b class="r" style="right:259px">12.32</b><s class="clip"><b class="g" style="right:0">388823</b></s><b class="r" style="right:152px">466121</b><b class="r" style="right:85px">0.83</b><b class="y" style="right:18px">1349</b></div>
<div class="row" style="top:829px"><b class="w idx">34</b><b class="w " style="left:52px">002025</b><b class="w k" style="left:117px">航天电器</b><b class="mk ">R</b><b class="r" style="right:1644px">4.58</b><b class="r" style="right:1568px">80.82</b><b class="r" style="right:1501px">3.54</b><b class="r" style="right:1425px">80.80</b><b class="r" style="right:1349px">80.82</b><b class="y" style="right:1282px">72116</b><b class="w" style="right:1215px">256</b><b class="r" style="right:1157px">0.58</b><b class="w" style="right:1090px">1.59</b><b class="r" style="right:1014px">79.05</b><b class="r" style="right:938px">83.66</b><b class="r" style="right:862px">78.91</b><b class="w" style="right:786px">77.28</b><b class="w" style="right:701px">60.25</b><b class="c" style="right:625px">5.88<i>亿</i></b><b class="r" style="right:567px">2.24</b><b class="w k" style="left:1364px">元器件</b><b class="w k" style="left:1462px">贵州</b><b class="w" style="right:335px">6.15</b><b class="r" style="right:259px">81.58</b><s class="clip"><b class="g" style="right:0">34042</b></s><b class="r" style="right:152px">38074</b><b class="r" style="right:85px">0.89</b><b class="y" style="right:18px">1</b></div>
<div class="row" style="top:852px"><b class="w idx">35</b><b class="w " style="left:52px">002136</b><b class="w k" style="left:117px">安 纳 达</b><b class="r" style="right:1644px">2.81</b><b class="r" style="right:1568px">13.91</b><b class="r" style="right:1501px">0.38</b><b class="r" style="right:1425px">13.91</b><b class="r" style="right:1349px">13.92</b><b class="y" style="right:1282px">96103</b><b class="w" style="right:1215px">415</b><b class="w" style="right:1157px">0.00</b><b class="w" style="right:1090px">4.49</b><b class="r" style="right:1014px">13.95</b><b class="r" style="right:938px">14.18</b><b class="r" style="right:862px">13.85</b><b class="w" style="right:786px">13.53</b><b class="w" style="right:701px">11.15</b><b class="c" style="right:625px">1.35<i>亿</i></b><b class="m" style="right:567px">3.85</b><b class="w k" style="left:1364px">化工原料</b><b class="w k" style="left:1462px">安徽</b><b class="w" style="right:335px">2.44</b><b class="r" style="right:259px">14.01</b><s class="clip"><b class="g" style="right:0">42010</b></s><b class="r" style="right:152px">54093</b><b class="r" style="right:85px">0.78</b><b class="y" style="right:18px">19</b></div>
<div class="row" style="top:875px"><b class="w idx">36</b><b class="w " style="left:52px">002137</b><b class="w k" style="left:117px">实益达</b><b class="r" style="right:1644px">2.92</b><b class="r" style="right:1568px">7.76</b><b class="r" style="right:1501px">0.22</b><b class="r" style="right:1425px">7.75</b><b class="r" style="right:1349px">7.76</b><b class="y" style="right:1282px">196.1<i>万</i></b><b class="m" style="right:1215px">17000</b><b class="g" style="right:1157px">-0.25</b><b class="w" style="right:1090px">50.21</b><b class="r" style="right:1014px">7.60</b><u class="bx"></u><b class="r bxt" style="right:938px">8.29</b><b class="w" style="right:862px">7.54</b><b class="w" style="right:786px">7.54</b><b class="w" style="right:701px">18.53</b><b class="c" style="right:625px">15.9<i>亿</i></b><b class="m" style="right:567px">6.51</b><b class="w k" style="left:1364px">通信设备</b><b class="w k" style="left:1462px">深圳</b><b class="w" style="right:335px">9.95</b><b class="r" style="right:259px">8.09</b><s class="clip"><b class="g" style="right:0">116.5<i>万</i></b></s><b class="r" style="right:152px">796234</b><b class="g" style="right:85px">1.46</b><b class="y" style="right:18px">840</b></div>
<div class="row" style="top:898px"><b class="w idx">37</b><b class="w " style="left:52px">002155</b><b class="w k" style="left:117px">湖南黄金</b><b class="mk ">R</b><b class="r" style="right:1644px">4.66</b><b class="r" style="right:1568px">13.92</b><b class="r" style="right:1501px">0.62</b><b class="r" style="right:1425px">13.92</b><b class="r" style="right:1349px">13.93</b><b class="y" style="right:1282px">296078</b><b class="m" style="right:1215px">2644</b><b class="w" style="right:1157px">0.00</b><b class="w" style="right:1090px">2.46</b><b class="r" style="right:1014px">13.55</b><b class="r" style="right:938px">14.44</b><b class="r" style="right:862px">13.50</b><b class="w" style="right:786px">13.30</b><b class="w" style="right:701px">31.37</b><b class="c" style="right:625px">4.15<i>亿</i></b><b class="r" style="right:567px">2.12</b><b class="w k" style="left:1364px">黄金</b><b class="w k" style="left:1462px">湖南</b><b class="w" style="right:335px">7.07</b><b class="r" style="right:259px">14.03</b><s class="clip"><b class="g" style="right:0">141191</b></s><b class="r" style="right:152px">154887</b><b class="r" style="right:85px">0.91</b><b class="y" style="right:18px">197</b></div>
<div class="row" style="top:921px"><b class="w idx">38</b><b class="w " style="left:52px">002164</b><b class="w k" style="left:117px">宁波东力</b><b class="mk ">R</b><b class="r" style="right:1644px">2.04</b><b class="r" style="right:1568px">6.00</b><b class="r" style="right:1501px">0.12</b><b class="r" style="right:1425px">6.00</b><b class="r" style="right:1349px">6.01</b><b class="y" style="right:1282px">208471</b><b class="m" style="right:1215px">1827</b><b class="g" style="right:1157px">-0.16</b><b class="w" style="right:1090px">4.34</b><b class="r" style="right:1014px">5.92</b><b class="r" style="right:938px">6.17</b><b class="r" style="right:862px">5.91</b><b class="w" style="right:786px">5.88</b><b class="w" style="right:701px">3.97</b><b class="c" style="right:625px">1.26<i>亿</i></b><b class="r" style="right:567px">2.90</b><b class="w k" style="left:1364px">机械基件</b><b class="w k" style="left:1462px">浙江</b><b class="w" style="right:335px">4.42</b><b class="r" style="right:259px">6.07</b><s class="clip"><b class="g" style="right:0">97246</b></s><b class="r" style="right:152px">111225</b><b class="r" style="right:85px">0.87</b><b class="y" style="right:18px">2077</b></div>
<div class="row" style="top:944px"><b class="w idx">39</b><b class="w " style="left:52px">002179</b><b class="w k" style="left:117px">中航光电</b><b class="mk ">R</b><b class="r" style="right:1644px">3.84</b><b class="r" style="right:1568px">66.30</b><b class="r" style="right:1501px">2.45</b><b class="r" style="right:1425px">66.26</b><b class="r" style="right:1349px">66.30</b><b class="y" style="right:1282px">187812</b><b class="w" style="right:1215px">423</b><b class="r" style="right:1157px">0.29</b><b class="w" style="right:1090px">1.21</b><b class="r" style="right:1014px">64.25</b><b class="r" style="right:938px">67.20</b><b class="r" style="right:862px">64.25</b><b class="w" style="right:786px">63.85</b><b class="w" style="right:701px">34.93</b><b class="c" style="right:625px">12.5<i>亿</i></b><b class="r" style="right:567px">2.79</b><b class="w k" style="left:1364px">元器件</b><b class="w k" style="left:1462px">河南</b><b class="w" style="right:335px">4.62</b><b class="r" style="right:259px">66.42</b><s class="clip"><b class="g" style="right:0">81732</b></s><b class="r" style="right:152px">106080</b><b class="r" style="right:85px">0.77</b><b class="y" style="right:18px">6</b></div>
</div>
<div class="bbar">
  <span class="bt" style="left:0;width:47px">分类<em>▲</em></span>
  <span class="bt red" style="left:47px;width:37px">自选</span>
  <span class="bt" style="left:84px;width:48px">板块<em>▲</em></span>
  <span class="bt" style="left:132px;width:48px">自定<em>▲</em></span>
  <span class="bt dim" style="left:180px;width:48px">港股<em>▲</em></span>
  <span class="bt dim" style="left:228px;width:48px">期权<em>▲</em></span>
  <span class="bt dim" style="left:276px;width:72px">期货现货<em>▲</em></span>
  <span class="bt dim" style="left:348px;width:72px">基金理财<em>▲</em></span>
  <span class="bt dim" style="left:420px;width:72px">美股环球<em>▲</em></span>
  <span class="bt dim" style="left:492px;width:72px">其它品种<em>▲</em></span>
  <span class="sl"></span><span class="thumb"></span>
  <span class="sr"></span>
  <span class="edge"></span>
</div>

<div class="dlg">
  <div class="tb"><span>条件选股</span>
    <svg width="546" height="22" viewBox="0 0 546 22" fill="none" stroke="#f6dada" stroke-width="1">
      <path d="M511 9.5 H521"/>
      <path d="M531 5 L540 14 M540 5 L531 14"/>
    </svg>
  </div>
  <span class="t" style="left:6px;top:35.5px">条件选股公式</span>
  <div class="inp" style="left:85px;top:30px;width:283px;height:24px"><span class="t" style="left:3px;top:5px">盘后小诸葛&nbsp;&nbsp;&nbsp; - 乾进专属</span>
    <span style="position:absolute;left:264px;top:0;width:1px;height:22px;background:#b8b8b8"></span>
    <span style="position:absolute;left:270px;top:9px;border-left:3.5px solid transparent;border-right:3.5px solid transparent;border-top:4px solid #606060"></span>
  </div>
  <div class="btn" style="left:373px;top:30px;width:42px;height:23px;line-height:20px">查找</div>
  <div class="btn" style="left:420px;top:30px;width:57px;height:23px;line-height:20px">用法注释</div>
  <div class="btn" style="left:481px;top:30px;width:57px;height:23px;line-height:20px">查看公式</div>

  <div class="gb" style="left:4px;top:67px;width:210px;height:201px"><span class="lg">计算参数</span></div>
  <span class="t" style="left:11px;top:95px">无参数需要设置</span>
  <span class="t" style="left:13px;top:243px">选股周期:</span>
  <div class="inp" style="left:73px;top:238px;width:128px;height:25px"><span class="t" style="left:4px;top:5px">日线</span>
    <span style="position:absolute;left:108px;top:0;width:1px;height:23px;background:#b8b8b8"></span>
    <span style="position:absolute;left:114px;top:10px;border-left:3.5px solid transparent;border-right:3.5px solid transparent;border-top:4px solid #606060"></span>
  </div>

  <div class="btn" style="left:223px;top:73px;width:66px;height:23px;line-height:20px">加入条件</div>
  <div class="btn" style="left:223px;top:111px;width:66px;height:23px;line-height:20px">删除条件</div>
  <div class="btn" style="left:223px;top:184px;width:66px;height:23px;line-height:20px">引入方案</div>
  <div class="btn" style="left:223px;top:222px;width:66px;height:23px;line-height:20px">保存方案</div>

  <span class="t" style="left:302px;top:59px">选股条件列表</span>
  <div class="inp" style="left:301px;top:75px;width:236px;height:174px;border-color:#828790">
    <div style="position:absolute;left:1px;top:1px;width:232px;height:19px;background:#0078d7;color:#fff;line-height:21px;font-size:12px;white-space:nowrap"><span style="padding-left:2px">盘后小诸葛</span><span style="padding-left:13px">日线</span></div>
  </div>
  <svg style="position:absolute;left:301px;top:255px" width="240" height="14" viewBox="0 0 240 14" fill="none">
    <path d="M10.2 3.3 A5.2 5.2 0 0 0 2.8 10.7" stroke="#6e6e6e" stroke-width="1.5"/><path d="M2.8 10.7 A5.2 5.2 0 0 0 10.2 3.3" stroke="#fff" stroke-width="1.3"/><circle cx="6.5" cy="7" r="2" fill="#8c8c8c"/>
    <path d="M153.2 3.3 A5.2 5.2 0 0 0 145.8 10.7" stroke="#6e6e6e" stroke-width="1.5"/><path d="M145.8 10.7 A5.2 5.2 0 0 0 153.2 3.3" stroke="#fff" stroke-width="1.3"/>
  </svg>
  <span class="t dis" style="left:320px;top:256.5px">全部条件相与</span>
  <span class="t dis" style="left:463px;top:256.5px">全部条件相或</span>
  <span class="t" style="left:475px;top:277px;color:#ff0000">选股完毕.</span>

  <div class="gb" style="left:4px;top:280px;width:210px;height:144px"><span class="lg">选股范围</span></div>
  <span class="t" style="left:10px;top:296px">上证Ａ股 深证Ａ股</span>
  <div class="btn" style="left:139px;top:289px;width:63px;height:23px;line-height:20px">改变范围</div>

  <span class="cb" style="left:223px;top:298px"></span>
  <span class="t" style="left:241px;top:298.5px">使用涨跌不定周期</span>
  <div class="sunk" style="left:343px;top:298px;width:194px;height:14px"></div>

  <span class="t" style="left:342px;top:322.5px">品种数</span>
  <div class="sunk" style="left:381px;top:321px;width:41px;height:15px"><span class="t" style="left:1px;top:0">4863</span></div>
  <span class="t" style="left:427px;top:322.5px">选中数</span>
  <div class="sunk" style="left:466px;top:321px;width:71px;height:15px"><span class="t" style="left:1px;top:0">65/1.3%</span></div>

  <span class="cb" style="left:223px;top:349px"><svg width="11" height="11" viewBox="0 0 11 11" style="position:absolute;left:0;top:0"><path d="M2 5.2 L4.4 8 L9 2.6" fill="none" stroke="#1a9a1a" stroke-width="1.8"/></svg></span>
  <span class="t" style="left:241px;top:349px">前复权数据</span>
  <span class="cb" style="left:310px;top:349px"></span>
  <span class="t" style="left:328px;top:349px">剔除当前未交易的品种</span>
  <span class="cb" style="left:457px;top:349px"></span>
  <span class="t" style="left:475px;top:349px">剔除ST品种</span>

  <span class="cb" style="left:223px;top:378px"></span>
  <span class="t" style="left:241px;top:378.5px">时间段内满足条件</span>
  <div class="btn" style="left:385px;top:372px;width:72px;height:23px;line-height:20px">选股入板块</div>
  <div class="btn" style="left:471px;top:372px;width:66px;height:23px;line-height:20px">执行选股</div>
  <div class="btn" style="left:471px;top:399px;width:66px;height:23px;line-height:20px">关闭</div>
</div>

</div>
</body>
</html>
